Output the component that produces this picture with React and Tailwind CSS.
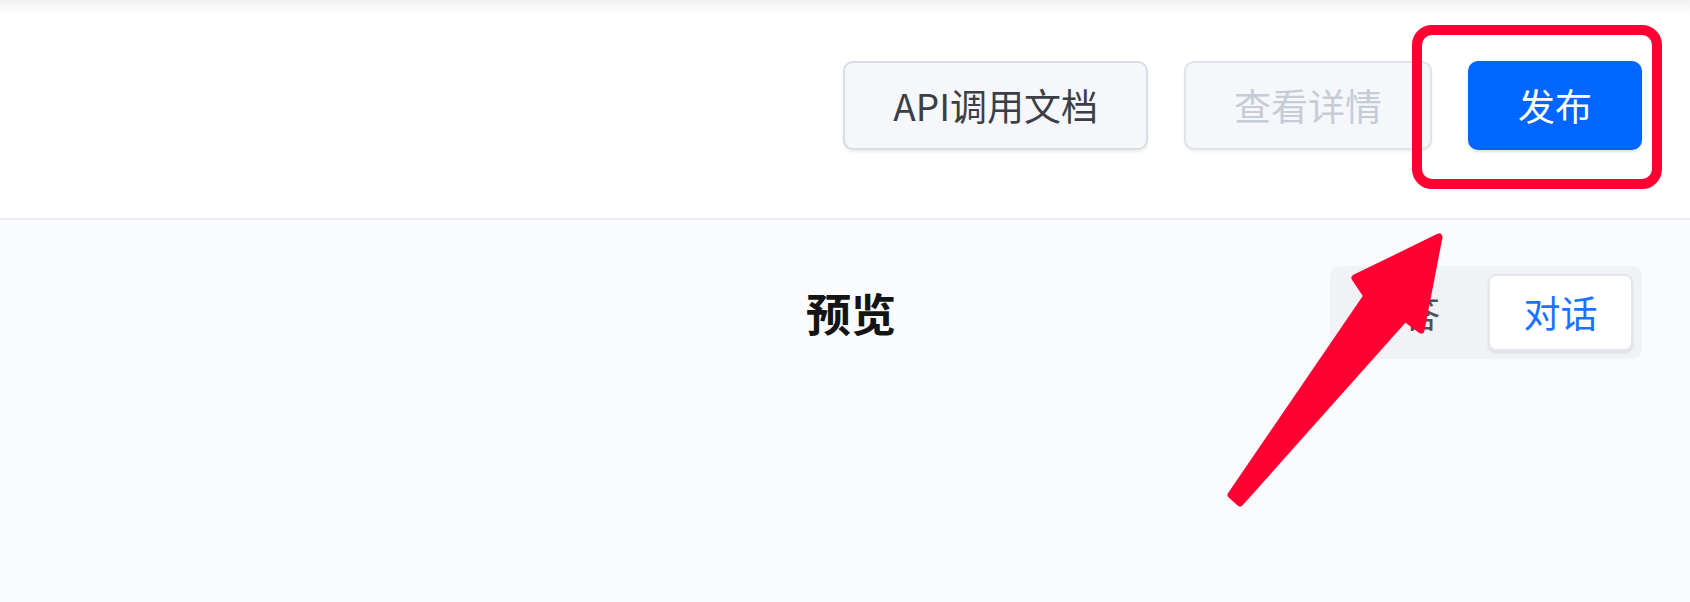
const font = { fontFamily: '"Noto Sans CJK SC", "Noto Sans", sans-serif' };

function HeaderButton({ children, variant }) {
  const styles = {
    default:
      "bg-[#f5f7fa] border-[#d8dde6] text-[#3a3f47] shadow-[0_2px_3px_rgba(0,0,0,0.08)]",
    disabled:
      "bg-[#f5f7fa] border-[#dfe3ea] text-[#c6ccd6] shadow-[0_2px_3px_rgba(0,0,0,0.06)]",
    primary:
      "bg-[#0066ff] border-[#0066ff] text-white shadow-[0_2px_3px_rgba(0,0,0,0.12)]",
  };
  return (
    <button
      className={`h-[89px] px-[48px] rounded-[10px] border-2 text-[37px] leading-none ${styles[variant]}`}
    >
      {children}
    </button>
  );
}

const App = () => {
  return (
    <div className="relative w-full h-[602px] overflow-hidden bg-[#fafbfd]" style={font}>
      {/* top shadow */}
      <div className="h-[15px] bg-gradient-to-b from-[#f1f1f1] to-white" />

      {/* header */}
      <div className="h-[205px] bg-white border-b-2 border-[#e8eaef] flex items-start justify-end gap-[36px] pr-[48px] pt-[46px]">
        <HeaderButton variant="default">API调用文档</HeaderButton>
        <HeaderButton variant="disabled">查看详情</HeaderButton>
        <HeaderButton variant="primary">发布</HeaderButton>
      </div>

      {/* preview bar */}
      <div className="grid grid-cols-[1fr_auto_1fr] items-center pl-[60px] pr-[48px] pt-[46px]">
        <div />
        <h2 className="text-[45px] font-bold text-[#141414] leading-none">预览</h2>
        <div className="flex justify-end">
          <div className="flex items-center h-[93px] p-[8px] pr-[9px] bg-[#f1f2f5] rounded-[10px]">
            <button className="h-full pl-[28px] pr-[48px] text-[37px] text-[#4b5058] leading-none">
              问答
            </button>
            <button className="h-[77px] w-[145px] bg-white border-2 border-[#e3e6eb] rounded-[8px] shadow-[0_2px_3px_rgba(0,0,0,0.08)] text-[37px] text-[#1a73ff] leading-none">
              对话
            </button>
          </div>
        </div>
      </div>

      {/* annotation: highlight box */}
      <div className="absolute left-[1412px] top-[25px] w-[250px] h-[164px] border-[10px] border-[#ff0033] rounded-[20px]" />

      {/* annotation: arrow */}
      <svg className="absolute inset-0 pointer-events-none" width="1690" height="602">
        <polygon
          points="1231,495 1367,296 1355,278 1439,237 1421,330 1405,318 1240,503"
          fill="#ff0033"
          stroke="#ff0033"
          strokeWidth="7"
          strokeLinejoin="round"
        />
      </svg>
    </div>
  );
};

export default App;
